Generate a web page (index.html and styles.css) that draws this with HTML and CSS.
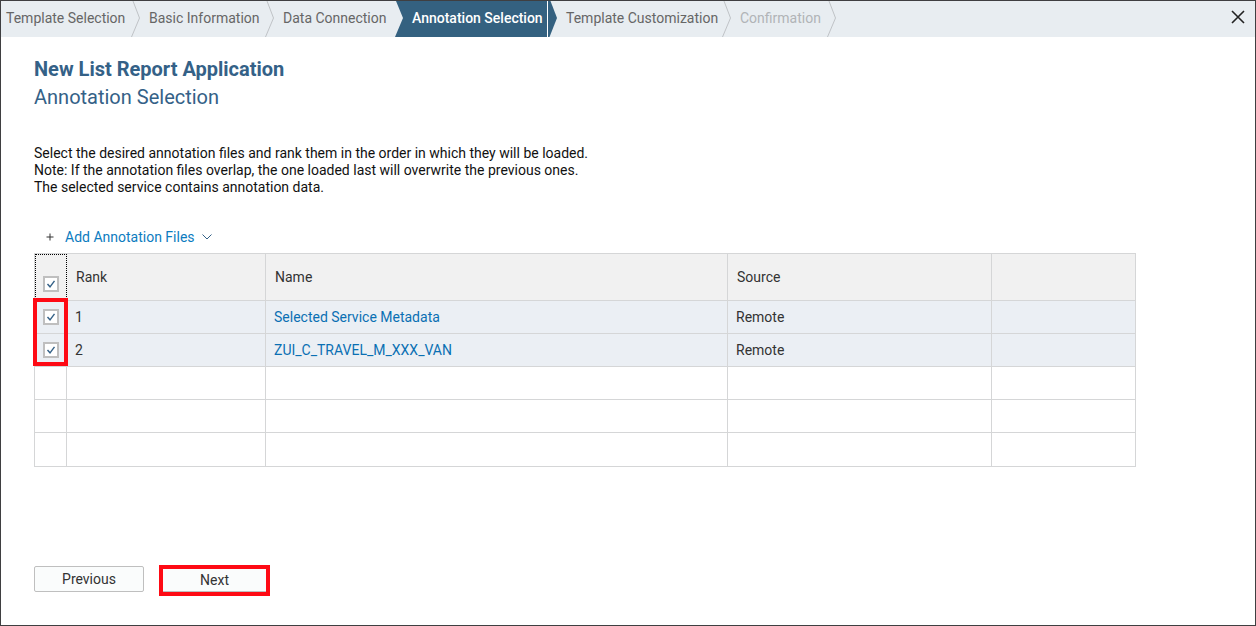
FILE: index.html
```html
<!DOCTYPE html>
<html lang="en">
<head>
<meta charset="utf-8">
<title>New List Report Application</title>
<link rel="stylesheet" href="styles.css">
</head>
<body>
<div class="wizard">
  <header class="topbar">
    <ol class="steps">
      <li class="step"><button class="step-button" type="button">Template Selection</button><svg class="chevron" viewBox="0 0 9 36"><path d="M2 0L8.5 17L0.5 36"/></svg></li>
      <li class="step"><button class="step-button" type="button">Basic Information</button><svg class="chevron" viewBox="0 0 9 36"><path d="M2 0L8.5 17L0.5 36"/></svg></li>
      <li class="step"><button class="step-button" type="button">Data Connection</button><svg class="chevron chevron-in" viewBox="0 0 9 36"><path d="M2 0L9 17L1 36H9V0Z"/></svg></li>
      <li class="step step-active" aria-current="step"><button class="step-button" type="button">Annotation Selection</button><svg class="chevron chevron-out" viewBox="0 0 9 36"><path d="M0 0H2.5L9 17L1.5 36H0Z"/></svg></li>
      <li class="step"><button class="step-button" type="button">Template Customization</button><svg class="chevron" viewBox="0 0 9 36"><path d="M2 0L8.5 17L0.5 36"/></svg></li>
      <li class="step"><button class="step-button" type="button" disabled>Confirmation</button><svg class="chevron" viewBox="0 0 9 36"><path d="M2 0L8.5 17L0.5 36"/></svg></li>
    </ol>
    <button class="close" type="button" aria-label="Close"><svg width="14" height="14" viewBox="0 0 14 14"><path d="M1 1L13 13M13 1L1 13"/></svg></button>
  </header>
  <main class="content">
    <h1 class="title">New List Report Application</h1>
    <h2 class="subtitle">Annotation Selection</h2>
    <p class="intro">Select the desired annotation files and rank them in the order in which they will be loaded.<br>Note: If the annotation files overlap, the one loaded last will overwrite the previous ones.<br>The selected service contains annotation data.</p>
    <button class="add" type="button">
      <svg width="8" height="8" viewBox="0 0 8 8"><path class="plus" d="M4 0.5V7.5M0.5 4H7.5"/></svg>
      <span class="add-label">Add Annotation Files</span>
      <svg width="10" height="6" viewBox="0 0 10 6"><path class="arrow" d="M0.5 0.5L5 5L9.5 0.5"/></svg>
    </button>
    <div class="table-wrap">
      <table class="files">
        <colgroup><col class="col-check"><col class="col-rank"><col><col class="col-source"><col class="col-actions"></colgroup>
        <thead>
          <tr><th class="check check-all"><input class="box" type="checkbox" checked aria-label="Select all"></th><th>Rank</th><th>Name</th><th>Source</th><th></th></tr>
        </thead>
        <tbody>
          <tr class="selected"><td class="check"><input class="box" type="checkbox" checked aria-label="Select rank 1"></td><td>1</td><td><a class="link" href="#">Selected Service Metadata</a></td><td>Remote</td><td></td></tr>
          <tr class="selected"><td class="check"><input class="box" type="checkbox" checked aria-label="Select rank 2"></td><td>2</td><td><a class="link" href="#">ZUI_C_TRAVEL_M_XXX_VAN</a></td><td>Remote</td><td></td></tr>
          <tr><td></td><td></td><td></td><td></td><td></td></tr>
          <tr><td></td><td></td><td></td><td></td><td></td></tr>
          <tr class="last"><td></td><td></td><td></td><td></td><td></td></tr>
        </tbody>
      </table>
      <div class="marker"></div>
    </div>
    <footer class="actions">
      <button class="action previous" type="button">Previous</button>
      <div class="highlight"><button class="action next" type="button">Next</button></div>
    </footer>
  </main>
</div>
</body>
</html>
```
FILE: styles.css
```css
* { box-sizing: border-box; }
body { margin: 0; font-family: Roboto, "Liberation Sans", sans-serif; font-size: 14px; color: #333; background: #fff; }
button { font: inherit; color: inherit; margin: 0; padding: 0; border: 0; background: none; cursor: pointer; }
.wizard { min-height: 100vh; border: 1px solid #3f3f41; }
.topbar { display: flex; justify-content: space-between; height: 36px; background: #e8edf1; }
.steps { display: grid; grid-template-columns: 139px 134px 129px 154px 174px 105px; margin: 0; padding: 0; list-style: none; }
.step { display: flex; justify-content: space-between; padding-left: 9px; color: #666; white-space: nowrap; }
.step:first-child { padding-left: 5px; }
.step-button { height: 34px; }
.step-button:disabled { color: #b1b4b7; cursor: default; }
.step-active { background: #346180; color: #fff; font-weight: 500; }
.chevron { width: 9px; height: 36px; flex: none; fill: none; stroke: #bfc3c6; }
.chevron-in { fill: #346180; stroke: none; }
.chevron-out { fill: #346180; stroke: none; background: #e8edf1; border-left: 1px solid #fff; box-sizing: content-box; }
.close { width: 34px; height: 31px; }
.close svg { display: block; margin: auto; fill: none; stroke: #222; stroke-width: 1.6; }
.content { padding: 20px 119px 0 33px; }
.title, .subtitle { margin: 0; font-size: 20px; line-height: 24px; color: #346187; }
.title { font-weight: 700; }
.subtitle { margin-top: 4px; font-weight: 400; }
.intro { margin: 36px 0 0; line-height: 17px; color: #111; }
.add { display: flex; align-items: center; height: 24px; margin: 29px 0 4px; padding-left: 12px; }
.add svg { fill: none; stroke: #333; }
.add .arrow { stroke: #346187; }
.add-label { margin: 0 7px 0 11px; color: #0c7cc0; }
.table-wrap { position: relative; }
.files { width: 100%; table-layout: fixed; border-collapse: separate; border-spacing: 0; border: solid #d5d6d7; border-width: 1px 0 0 1px; }
.col-check { width: 32px; }
.col-rank { width: 199px; }
.col-source { width: 264px; }
.col-actions { width: 144px; }
.files th, .files td { padding: 0 8px; border: solid #d5d6d7; border-width: 0 1px 1px 0; text-align: left; }
.files th { height: 47px; padding: 0 9px; background: #f1f1f1; font-weight: 400; }
.files td { height: 33px; }
.files .last td { height: 34px; }
.files .selected { background: #ebeff4; }
.files .check { padding: 0 0 0 8px; }
.files .check-all { padding-top: 14px; border-right: 1px dotted #000; outline: 1px dotted #000; outline-offset: -1px; }
.box { display: block; appearance: none; width: 16px; height: 16px; margin: 0; border: 2px solid #bfbfbf; background: #fff url("data:image/svg+xml,%3Csvg xmlns='http://www.w3.org/2000/svg' viewBox='0 0 12 12'%3E%3Cpath d='M2.5 6L5 8.8L9.5 2.8' fill='none' stroke='%23346187' stroke-width='1.4'/%3E%3C/svg%3E") center / 12px 12px no-repeat; }
.link { color: #0a6fb3; text-decoration: none; }
.marker { position: absolute; top: 45px; left: -1px; width: 35px; height: 68px; border: 4px solid #fe0a14; pointer-events: none; }
.actions { display: flex; align-items: flex-start; gap: 15px; padding: 98px 0 29px; }
.action { background: #fafcfc; color: #333; }
.previous { width: 110px; height: 26px; margin-top: 1px; border: 1px solid #bfbfbf; border-radius: 2px; }
.highlight { border: 4px solid #fe0a14; }
.next { display: block; width: 103px; height: 23px; border-bottom: 1px solid #bfbfbf; }
```
